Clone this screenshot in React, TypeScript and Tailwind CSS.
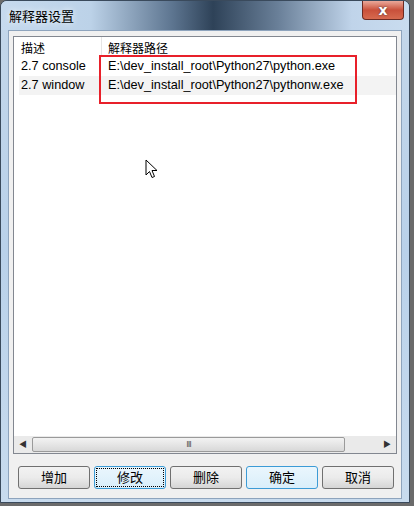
import React from "react";

const font = { fontFamily: '"Liberation Sans", "Noto Sans CJK SC", sans-serif' };

function Btn({ label, focused }: { label: string; focused?: number }) {
  return (
    <div
      className={`flex h-[23px] w-[72px] items-center justify-center rounded-[3px] border text-[13px] text-black ${
        focused ? "border-[#3c9bd6] bg-gradient-to-b from-[#eaf6fd] to-[#d9eefa]" : "border-[#707070] bg-gradient-to-b from-[#f2f2f2] via-[#ebebeb] to-[#d5d5d5]"
      }`}
    >
      {focused === 2 ? (
        <div className="flex h-[19px] w-[68px] items-center justify-center border border-dotted border-black">{label}</div>
      ) : (
        label
      )}
    </div>
  );
}

export default function App() {
  return (
    <div className="relative h-[506px] w-[414px] overflow-hidden bg-[#6b6b6b]" style={font}>
      <div className="flex h-[503px] w-[410px] flex-col rounded-t-[7px] border border-[#3a4a5c] bg-gradient-to-b from-[#c4d7ea] via-[#b9d1ea] to-[#c8dbee]">
        {/* title bar */}
        <div className="relative flex h-[29px] shrink-0 items-start rounded-t-[6px] bg-[linear-gradient(90deg,#c6daee_0%,#bcd2e8_22%,#5d7590_42%,#2e4258_52%,#6a8099_68%,#c0d4ea_86%,#c9dcef_100%)]">
          <span className="pl-[8px] pt-[6px] text-[13px] text-black [text-shadow:0_0_6px_#fff]">解释器设置</span>
          <div className="absolute right-[5px] top-0 flex h-[19px] w-[42px] items-center justify-center rounded-b-[4px] border border-t-0 border-[#6b2a22] bg-gradient-to-b from-[#e9a89a] via-[#c9503b] to-[#d66a4f]">
            <span className="text-[14px] font-bold leading-none text-white [text-shadow:0_0_2px_#333]" style={{ fontFamily: '"DejaVu Sans", sans-serif' }}>x</span>
          </div>
        </div>
        {/* client */}
        <div className="mx-[7px] mb-[3px] flex flex-1 flex-col border border-[#8ea4bd] bg-[#f0f0f0]">
          <div className="mx-[4px] mt-[5px] flex h-[418px] flex-col border border-[#828790] bg-white">
            {/* header */}
            <div className="flex h-[20px] shrink-0 items-center text-[12px] text-black">
              <div className="h-full w-[87px] pl-[7px] pt-[3px]">描述</div>
              <div className="h-full w-px bg-[#e5e5e5]" />
              <div className="h-full pl-[6px] pt-[3px]">解释器路径</div>
            </div>
            <div className="relative flex flex-col text-[12.7px] text-black">
              <div className="flex h-[19px] items-center">
                <div className="w-[94px] pl-[7px]">2.7 console</div>
                <div>E:\dev_install_root\Python27\python.exe</div>
              </div>
              <div className="ml-[5px] flex h-[19px] items-center bg-[#f3f3f3]">
                <div className="w-[89px] pl-[2px]">2.7 window</div>
                <div>E:\dev_install_root\Python27\pythonw.exe</div>
              </div>
              <div className="absolute left-[85px] top-[-2px] h-[49px] w-[258px] border-2 border-[#e8202a]" />
            </div>
            <div className="relative flex-1">
              <svg className="absolute left-[131px] top-[64px]" width="13" height="21" viewBox="0 0 13 21">
                <path d="M1 1 L1 16 L4.5 12.5 L7 18.5 L9.5 17.5 L7 11.5 L12 11.5 Z" fill="#fff" stroke="#000" strokeWidth="1" />
              </svg>
            </div>
            {/* scrollbar */}
            <div className="flex h-[17px] shrink-0 items-center bg-[#eaeaea]">
              <div className="flex h-full w-[18px] items-center justify-center text-[8px] text-[#333]">◀</div>
              <div className="flex h-[15px] w-[313px] items-center justify-center rounded-[2px] border border-[#9a9a9a] bg-gradient-to-b from-[#f3f3f3] to-[#d8d8d8] text-[9px] tracking-[-1px] text-[#555]">III</div>
              <div className="flex-1" />
              <div className="flex h-full w-[18px] items-center justify-center text-[8px] text-[#333]">▶</div>
            </div>
          </div>
          <div className="mt-[12px] flex gap-[4px] pl-[9px]">
            <Btn label="增加" />
            <Btn label="修改" focused={2} />
            <Btn label="删除" />
            <Btn label="确定" focused={1} />
            <Btn label="取消" />
          </div>
        </div>
      </div>
    </div>
  );
}
